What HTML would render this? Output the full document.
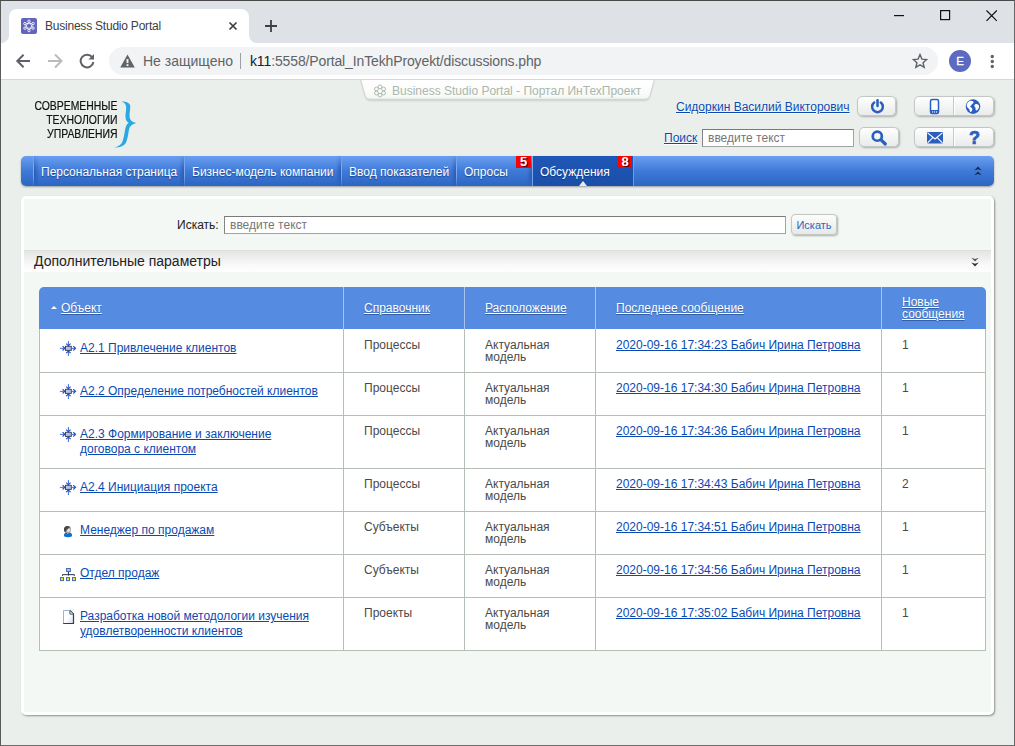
<!DOCTYPE html>
<html lang="ru">
<head>
<meta charset="utf-8">
<title>Business Studio Portal</title>
<style>
*{box-sizing:border-box;margin:0;padding:0}
html,body{width:1015px;height:746px;overflow:hidden}
body{font-family:"Liberation Sans",sans-serif;font-size:12px;color:#444;background:#ebefec;position:relative}
a{color:#0b49b2;text-decoration:underline}
.abs{position:absolute}
/* window frame */
#frame{position:absolute;left:0;top:0;width:1015px;height:746px;border:1px solid #666;border-top-color:#4a4a4a;border-left-color:#5a5a5a;border-bottom-color:#6c6c6c;z-index:50;pointer-events:none}
/* chrome */
#tabstrip{position:absolute;left:1px;top:1px;width:1013px;height:42px;background:#dee1e6}
#tab{position:absolute;left:8px;top:8px;width:240px;height:34px;background:#fff;border-radius:8px 8px 0 0}
#tab:before,#tab:after{content:"";position:absolute;bottom:0;width:8px;height:8px;background:radial-gradient(circle at 0 0,rgba(255,255,255,0) 7.5px,#fff 8.5px)}
#tab:before{left:-8px}
#tab:after{right:-8px;background:radial-gradient(circle at 100% 0,rgba(255,255,255,0) 7.5px,#fff 8.5px)}
#tabtitle{position:absolute;left:36px;top:10px;font-size:12px;color:#3c4043;white-space:nowrap;letter-spacing:-0.22px}
#toolbar{position:absolute;left:1px;top:43px;width:1013px;height:37px;background:#fff;border-bottom:1px solid #d5d8db}
#omni{position:absolute;left:108px;top:4px;width:829px;height:28px;border-radius:14px;background:#f1f3f4}
#omni span{position:absolute;top:6px;font-size:14px;white-space:nowrap}
/* page */
#page{position:absolute;left:1px;top:80px;width:1013px;height:665px;background:#ebefec;overflow:hidden}

.lg{-webkit-text-stroke:0.2px #111;transform:scaleX(0.868);transform-origin:100% 50%}
.inp{background:#fff;border:1px solid #a2a2a2;border-top-color:#7a7a7a;border-left-color:#848484}
.inp span{position:absolute;left:5px;top:2px;font-size:12px;color:#777;white-space:nowrap}
.btn{border:1px solid #c3c8c4;border-radius:5px;background:linear-gradient(#fefefe,#e9ecea);box-shadow:1px 1px 2px rgba(0,0,0,.28)}
.sbtn{border:1px solid #c3c8c4;border-radius:4px;background:linear-gradient(#fdfdfd,#e6e9e7);box-shadow:1px 1px 2px rgba(0,0,0,.3);color:#3563c0;font-size:11px;text-align:center;line-height:20px}
#nav{border-radius:5px;background:linear-gradient(#6a9ff0,#3f7ad8 50%,#2b66c3);box-shadow:0 1px 2px rgba(0,0,0,.35)}
#nav .sep{top:0;width:6px;pointer-events:none;height:30px;background:linear-gradient(90deg,rgba(20,55,140,0),rgba(20,55,140,.42) 82%,rgba(20,55,140,.48) 83.3%,rgba(165,200,255,.6) 83.4%,rgba(165,200,255,.6));-webkit-mask-image:linear-gradient(rgba(0,0,0,.2),#000 40%,#000 65%,rgba(0,0,0,.2));mask-image:linear-gradient(rgba(0,0,0,.2),#000 40%,#000 65%,rgba(0,0,0,.2))}
#nav .sep.f{transform:scaleX(-1)}
#nav .ni{top:9px;font-size:12px;color:#fff;white-space:nowrap;text-shadow:0 1px 1px rgba(10,30,100,.55)}
#nav .badge{z-index:2;top:0;width:15px;height:12px;background:#fb0202;color:#fff;font-size:13px;font-weight:bold;line-height:12px;text-align:center;text-shadow:1px 1px 0 rgba(40,0,30,.8)}
#act{background:linear-gradient(#1f57b6,#1b4fa9);box-shadow:-1px 0 0 rgba(125,170,240,.75),1px 0 0 rgba(125,170,240,.75)}
#panel{border:3px solid #fff;border-radius:5px;background:#f3f8f5;box-shadow:1px 1px 2px rgba(0,0,0,.4)}
#adv{background:linear-gradient(#e4e6e5,#f9faf9 70%,#fdfefd);border-top:1px solid #dde0de}
#adv span{position:absolute;left:10px;top:2px;font-size:14px;color:#222;white-space:nowrap}
#grid{border-collapse:separate;border-spacing:0;table-layout:fixed;width:947px;font-size:12px;color:#4a4a4a}
#grid th{height:42px;background:#558be0;font-weight:normal;text-align:left;padding:0 0 1px 20px;border-left:1px solid #a8c4ee;vertical-align:middle;line-height:12px;font-size:12px}
#grid th:first-child{border-left:0;border-radius:5px 0 0 0;padding-left:9px}
#grid th:last-child{border-radius:0 5px 0 0;padding-bottom:0}
#grid th a{color:#fff;text-shadow:0 1px 1px rgba(20,40,90,.45)}
#grid td{background:#fff;border-left:1px solid #b5beb7;border-bottom:1px solid #b5beb7;vertical-align:top;padding:9px 0 0 20px;line-height:12px;font-size:12px;color:#4a4a4a}
#grid td:last-child{border-right:1px solid #b5beb7}
#grid td.c1{padding:11px 0 0 40px;line-height:15px;position:relative}
#grid td a{color:#0b49b2}
#grid tr.r1 td{padding-top:10px}#grid tr.r1 td.c1{padding-top:12px}#grid tr.r1 .ic{top:10px}
.arr{display:inline-block;width:0;height:0;border-left:3px solid transparent;border-right:3px solid transparent;border-bottom:3.5px solid #fff;margin:0 4.5px 2px 2.5px;vertical-align:middle}
.ic{position:absolute;left:19px;top:9px;width:18px;height:18px}
</style>
</head>
<body>
<div id="tabstrip">
  <div id="tab">
    <svg class="abs" style="left:12px;top:9px" width="16" height="16" viewBox="0 0 16 16"><rect width="16" height="16" rx="2" fill="#6264bd"/><g fill="none" stroke="#fff" stroke-width="0.75" stroke-linejoin="round"><path d="M8 3.2L12.1 10.2H3.9Z"/><path d="M8 12.6L3.9 5.6H12.1Z"/></g><g fill="#6264bd" stroke="#fff" stroke-width="0.85"><circle cx="8" cy="3.2" r="1.2"/><circle cx="8" cy="12.6" r="1.2"/><circle cx="3.9" cy="5.6" r="1.2"/><circle cx="12.1" cy="5.6" r="1.2"/><circle cx="3.9" cy="10.2" r="1.2"/><circle cx="12.1" cy="10.2" r="1.2"/></g></svg>
    <div id="tabtitle">Business Studio Portal</div>
    <svg class="abs" style="left:219px;top:12px" width="10" height="10" viewBox="0 0 10 10"><path d="M1.5 1.5L8.5 8.5M8.5 1.5L1.5 8.5" stroke="#3c4043" stroke-width="1.7" fill="none"/></svg>
  </div>
  <svg class="abs" style="left:263px;top:18px" width="14" height="14" viewBox="0 0 14 14"><path d="M7 1V13M1 7H13" stroke="#3c4043" stroke-width="1.8" fill="none"/></svg>
  <!-- window controls -->
  <svg class="abs" style="left:893px;top:14px" width="10" height="2"><rect width="10" height="1.2" fill="#111"/></svg>
  <svg class="abs" style="left:939px;top:9px" width="11" height="11"><rect x="0.6" y="0.6" width="9" height="9" fill="none" stroke="#111" stroke-width="1.2"/></svg>
  <svg class="abs" style="left:984.7px;top:8.7px" width="12" height="12" viewBox="0 0 12 12"><path d="M0.5 0.5L10.8 10.8M10.8 0.5L0.5 10.8" stroke="#111" stroke-width="1.15" fill="none"/></svg>
</div>
<div id="toolbar">
  <svg class="abs" style="left:14px;top:10px" width="16" height="16" viewBox="0 0 16 16"><path d="M15 8H3.2M8.6 1.7L2.3 8L8.6 14.3" stroke="#5f6368" stroke-width="2" fill="none"/></svg>
  <svg class="abs" style="left:46px;top:10px" width="16" height="16" viewBox="0 0 16 16"><path d="M1 8H13.5M8 1.5L14.5 8L8 14.5" stroke="#b9bbbe" stroke-width="2" fill="none"/></svg>
  <svg class="abs" style="left:78px;top:10px" width="16" height="16" viewBox="0 0 16 16"><path d="M13.2 4.2A6.4 6.4 0 1 0 14.4 9" stroke="#5f6368" stroke-width="2" fill="none"/><path d="M15 1V6.6H9.4Z" fill="#5f6368"/></svg>
  <div id="omni">
    <svg class="abs" style="left:11px;top:7px" width="15" height="14" viewBox="0 0 15 14"><path d="M7.5 0.5L14.8 13.5H0.2Z" fill="#5f6368"/><rect x="6.55" y="5" width="1.9" height="4.1" fill="#f1f3f4"/><rect x="6.55" y="10.2" width="1.9" height="1.9" fill="#f1f3f4"/></svg>
    <span style="left:34px;color:#5f6368">Не защищено</span>
    <div class="abs" style="left:131px;top:6px;width:1px;height:16px;background:#9aa0a6"></div>
    <span style="left:141px;color:#202124;letter-spacing:-0.13px">k11<span style="position:static;color:#5f6368">:5558/Portal_InTekhProyekt/discussions.php</span></span>
    <svg class="abs" style="left:803px;top:6px" width="16" height="16" viewBox="0 0 16 16"><path d="M8 1.6L9.9 6.1L14.7 6.5L11.05 9.65L12.15 14.4L8 11.9L3.85 14.4L4.95 9.65L1.3 6.5L6.1 6.1Z" fill="none" stroke="#5f6368" stroke-width="1.4" stroke-linejoin="miter"/></svg>
  </div>
  <div class="abs" style="left:948px;top:7px;width:22px;height:22px;border-radius:11px;background:#5c6bc0;color:#fff;font-size:11.5px;-webkit-text-stroke:0.3px #fff;text-align:center;line-height:22px">E</div>
  <svg class="abs" style="left:989px;top:10px" width="5" height="17"><circle cx="2.3" cy="3.5" r="1.7" fill="#5f6368"/><circle cx="2.3" cy="8.5" r="1.7" fill="#5f6368"/><circle cx="2.3" cy="13.5" r="1.7" fill="#5f6368"/></svg>
</div>
<div id="page">
<svg width="0" height="0" style="position:absolute"><defs>
<linearGradient id="gbox" x1="0" y1="0" x2="1" y2="1"><stop offset="0" stop-color="#c9d3ea"/><stop offset="1" stop-color="#9fb0d4"/></linearGradient>
<linearGradient id="gdoc" x1="0" y1="0" x2="1" y2="1"><stop offset="0.5" stop-color="#fff"/><stop offset="1" stop-color="#d3d9ea"/></linearGradient>
<radialGradient id="ghead" cx="0.6" cy="0.55" r="0.6"><stop offset="0" stop-color="#ffffff"/><stop offset="0.4" stop-color="#cfcfcf"/><stop offset="0.85" stop-color="#6e6e6e"/><stop offset="1" stop-color="#5a5a5a"/></radialGradient>
<symbol id="i-proc" viewBox="0 0 18 18"><g fill="none" stroke="#3a6ae6" stroke-width="1"><path d="M0.9 9.35H5.8"/><path d="M12.9 9.35H16.6"/><path d="M9.4 2V6.8"/><path d="M9.4 17V12"/></g><g fill="none" stroke="#2747b0" stroke-width="1.1"><path d="M3.6 7.2L5.8 9.35L3.6 11.5"/><path d="M14.3 7.2L16.5 9.35L14.3 11.5"/><path d="M7.2 4.6L9.4 6.8L11.6 4.6"/><path d="M7.2 14.2L9.4 12L11.6 14.2"/></g><rect x="6.5" y="7.3" width="5.8" height="4.1" fill="url(#gbox)" stroke="#2c3e5c" stroke-width="0.9"/></symbol>
<symbol id="i-man" viewBox="0 0 18 18"><path d="M4.9 14.5C4.9 12.3 6.6 11.2 9 11.2C11.4 11.2 13.1 12.3 13.1 14.5C13.1 15.8 11.6 16.2 9 16.2C6.4 16.2 4.9 15.8 4.9 14.5Z" fill="#0f6fd0"/><path d="M7.7 11.5L8.9 12.8L10.1 11.5Z" fill="#fff"/><circle cx="8.5" cy="8.6" r="3.5" fill="url(#ghead)"/><path d="M5.05 9.4A3.5 3.5 0 0 1 10.9 6L6.3 10.9Q5.3 10.4 5.05 9.4Z" fill="#3a3636" opacity="0.8"/></symbol>
<symbol id="i-org" viewBox="0 0 18 18"><path d="M9.45 7.9V11.6M3.55 11.9V10.65H15.35V11.9" fill="none" stroke="#2a3350" stroke-width="1"/><rect x="7.55" y="4.5" width="3.9" height="3" fill="#a9c4f8" stroke="#4a6cb0" stroke-width="1"/><g fill="#ffee00" stroke="#4a6cb0" stroke-width="1"><rect x="1.5" y="13.6" width="3" height="3"/><rect x="7.5" y="13.6" width="3" height="3"/><rect x="13.5" y="13.6" width="3" height="3"/></g></symbol>
<symbol id="i-doc" viewBox="0 0 18 18"><path d="M4.5 3.5H11L14.5 7V16.5H4.5Z" fill="url(#gdoc)"/><path d="M4.5 16.5V3.5H11" fill="none" stroke="#9db2e2" stroke-width="1"/><path d="M11 3.5L14.5 7V16.5H4.2" fill="none" stroke="#2c3e58" stroke-width="1.2"/><path d="M10.9 3.9V7.1H14.2" fill="#fff" stroke="#2c3e58" stroke-width="0.9"/></symbol>
</defs></svg>


<!-- logo -->
<div class="abs" id="logo" style="left:0;top:19px;width:116.5px;text-align:right;color:#111;font-size:12px;line-height:14px;white-space:nowrap">
<div class="lg">СОВРЕМЕННЫЕ</div><div class="lg">ТЕХНОЛОГИИ</div><div class="lg">УПРАВЛЕНИЯ</div></div>
<svg class="abs" style="left:113px;top:20px" width="24" height="50" viewBox="0 0 24 50"><path d="M7.3 1.4C11 1.2 15.6 2.2 16.2 5.5C16.6 9 15.2 13 15.6 17C16 20.5 18.5 22 22.1 23C18.5 24 16 25.5 15 29.8C14 35 13.6 40 11.5 43.5C9.5 46.5 5 47.8 0.2 47.6C4 46.8 7 45 8.3 42C10 38 10.4 33 11.2 29C11.8 26 12.8 24.3 14.6 23.1C12.6 21.5 11.6 19.5 11.5 17C11.3 13 12.6 9 12 6C11.6 3.6 10 2.2 7.3 1.4Z" fill="#2aa8e6"/></svg>

<!-- top center tab -->
<svg class="abs" style="left:356px;top:0" width="302" height="24" viewBox="0 0 302 24"><defs><linearGradient id="tg" x1="0" y1="0" x2="0" y2="1"><stop offset="0" stop-color="#ffffff"/><stop offset="0.75" stop-color="#f9fbf9"/><stop offset="1" stop-color="#f0f4f1"/></linearGradient><filter id="tf" x="-5%" y="-20%" width="110%" height="160%"><feGaussianBlur stdDeviation="0.9"/></filter></defs>
<path d="M4 -1L8.6 15.8Q9.6 19.8 13 19.8H288Q291.6 19.8 292.6 15.8L297 -1Z" fill="#9aa39c" opacity="0.55" filter="url(#tf)" transform="translate(0,0.8)"/>
<path d="M3.5 -1L8.2 15.8Q9.2 19.3 12.6 19.3H288.4Q291.8 19.3 292.8 15.8L297.5 -1Z" fill="url(#tg)" stroke="#cdd3ce" stroke-width="0.9"/></svg>
<svg class="abs" style="left:372px;top:4px" width="14" height="14" viewBox="0 0 14 14"><g fill="none" stroke="#aebbb0" stroke-width="1"><circle cx="7" cy="2.9" r="1.9"/><circle cx="7" cy="11.1" r="1.9"/><circle cx="3.45" cy="4.95" r="1.9"/><circle cx="10.55" cy="4.95" r="1.9"/><circle cx="3.45" cy="9.05" r="1.9"/><circle cx="10.55" cy="9.05" r="1.9"/></g></svg>
<div class="abs" style="left:391px;top:4px;font-size:12px;color:#a9b6ab;white-space:nowrap;text-shadow:0 1px 0 #fff">Business Studio Portal - Портал ИнТехПроект</div>

<!-- user / search -->
<a class="abs" style="left:675px;top:20px;white-space:nowrap;text-shadow:0 1px 0 #fff">Сидоркин Василий Викторович</a>
<a class="abs" style="left:663px;top:51px;white-space:nowrap;text-shadow:0 1px 0 #fff">Поиск</a>
<div class="abs inp" style="left:701px;top:49px;width:152px;height:18px"><span style="top:1px">введите текст</span></div>

<div class="abs btn" style="left:856px;top:16px;width:39px;height:20px">
 <svg class="abs" style="left:12px;top:2px" width="15" height="15" viewBox="0 0 15 15"><path d="M4.2 3.6A5.35 5.35 0 1 0 10.8 3.6" fill="none" stroke="#2a5fc0" stroke-width="2.5" stroke-linecap="round"/><path d="M7.5 1.3V7" stroke="#2a5fc0" stroke-width="2.5" stroke-linecap="round"/></svg></div>
<div class="abs btn" style="left:858px;top:47px;width:40px;height:20px">
 <svg class="abs" style="left:10px;top:1px" width="19" height="18" viewBox="0 0 19 18"><circle cx="7.3" cy="7.2" r="4.55" fill="none" stroke="#2a5fc0" stroke-width="2.7"/><path d="M10.8 10.6L15.3 15" stroke="#2a5fc0" stroke-width="3.2" stroke-linecap="round"/></svg></div>
<div class="abs btn" style="left:913px;top:16px;width:80px;height:20px">
 <div class="abs" style="left:38px;top:0;width:1px;height:18px;background:#c5cac6"></div><div class="abs" style="left:39px;top:0;width:1px;height:18px;background:#fff"></div>
 <svg class="abs" style="left:14px;top:1px" width="11" height="17" viewBox="0 0 11 17"><rect x="1.5" y="1.6" width="8" height="13.8" rx="1.6" fill="#fff" stroke="#2a5fc0" stroke-width="1.5"/><path d="M1 12H10V14.3Q10 16 8.3 16H2.7Q1 16 1 14.3Z" fill="#2a5fc0"/><rect x="3" y="13.4" width="1.1" height="1.1" fill="#fff"/><rect x="5" y="13.4" width="1.1" height="1.1" fill="#fff"/><rect x="7" y="13.4" width="1.1" height="1.1" fill="#fff"/></svg>
 <svg class="abs" style="left:50px;top:2px" width="16" height="16" viewBox="0 0 16 16"><circle cx="8" cy="7.6" r="7.3" fill="#2a5fc0"/><path d="M4.2 2.2C5.8 1.4 7.6 1.8 8.4 2.8C9 3.6 8.2 4.6 7.2 5C6.2 5.4 6.6 6.4 5.6 6.8C4.8 7.2 5.4 8.4 6.4 8.8C7.4 9.2 7.6 10.4 7 11.6C6.6 12.6 5.8 13.6 5.2 12.8C4.6 12 4.8 10.6 3.8 9.8C2.8 9 1.6 7.6 1.6 6C2 4.4 3 3 4.2 2.2ZM10 5.4C11 4.8 12.6 5 13.6 6C14.4 7 14.2 8.6 13.4 9.8C12.6 11 11.4 12 10.8 11C10.2 10 11 8.8 10 8C9.2 7.4 9 6 10 5.4Z" fill="#fff"/></svg></div>
<div class="abs btn" style="left:913px;top:47px;width:80px;height:20px">
 <div class="abs" style="left:38px;top:0;width:1px;height:18px;background:#c5cac6"></div><div class="abs" style="left:39px;top:0;width:1px;height:18px;background:#fff"></div>
 <svg class="abs" style="left:12px;top:4px" width="16" height="12" viewBox="0 0 16 12"><rect width="16" height="11.4" rx="0.8" fill="#2a5fc0"/><path d="M0.6 0.8L8 7L15.4 0.8M0.6 10.8L6 5.4M15.4 10.8L10 5.4" fill="none" stroke="#fff" stroke-width="1.1"/></svg>
 <div class="abs" style="left:40px;top:-1px;width:39px;text-align:center;font-size:18px;font-weight:bold;color:#2a5fc0;line-height:22px;-webkit-text-stroke:0.7px #2a5fc0">?</div></div>

<!-- nav bar -->
<div class="abs" id="nav" style="left:20px;top:76px;width:973px;height:30px">
 <div class="abs sep f" style="left:12px"></div>
 <div class="abs ni" style="left:20px">Персональная страница</div>
 <div class="abs sep" style="left:158px"></div>
 <div class="abs ni" style="left:171px">Бизнес-модель компании</div>
 <div class="abs sep" style="left:315px"></div>
 <div class="abs ni" style="left:328px">Ввод показателей</div>
 <div class="abs sep" style="left:430px"></div>
 <div class="abs ni" style="left:443px">Опросы</div>
 <div class="abs badge" style="left:495px">5</div>
 <div class="abs sep" style="left:506px"></div>
 <div class="abs" id="act" style="left:512px;top:0;width:100px;height:30px"></div>
 <div class="abs ni" style="left:519px">Обсуждения</div>
 <div class="abs badge" style="left:597px;width:14px">8</div>
 <div class="abs" style="left:557px;top:25px;margin-left:0.5px;width:0;height:0;border-left:4.5px solid transparent;border-right:4.5px solid transparent;border-bottom:5px solid #e9edea"></div>
 <svg class="abs" style="left:953px;top:10px" width="8" height="10" viewBox="0 0 8 10"><path d="M0.3 4.5L4 0.6L7.7 4.5L4 3.3ZM0.3 9.3L4 5.4L7.7 9.3L4 8.1Z" fill="#14274d"/></svg>
</div>

<!-- main panel -->
<div class="abs" id="panel" style="left:20px;top:116px;width:973px;height:519px">
 <div class="abs" style="left:153px;top:19px;font-size:12px;color:#222">Искать:</div>
 <div class="abs inp" style="left:200px;top:17px;width:562px;height:18px"><span style="top:1px">введите текст</span></div>
 <div class="abs sbtn" style="left:767px;top:15px;width:46px;height:21px">Искать</div>
 <div class="abs" id="adv" style="left:0;top:51px;width:967px;height:22px"><span>Дополнительные параметры</span>
  <svg class="abs" style="left:946.5px;top:6px" width="8" height="10" viewBox="0 0 8 10"><defs><linearGradient id="cg" x1="0" y1="0" x2="0" y2="1"><stop offset="0" stop-color="#8a8a8a"/><stop offset="1" stop-color="#222"/></linearGradient></defs><path d="M0.3 0.7L4 4.6L7.7 0.7L4 2Z" fill="#555"/><path d="M0.3 5.5L4 9.4L7.7 5.5L4 6.8Z" fill="#2e2e2e"/></svg></div>
 <table id="grid" class="abs" style="left:15px;top:88px" cellspacing="0" cellpadding="0">
  <colgroup><col style="width:304px"><col style="width:121px"><col style="width:131px"><col style="width:286px"><col style="width:105px"></colgroup>
  <tr class="hd"><th><span class="arr"></span><a>Объект</a></th><th><a>Справочник</a></th><th><a>Расположение</a></th><th><a>Последнее сообщение</a></th><th><a>Новые<br>сообщения</a></th></tr>
  <tr class="r1" style="height:44px"><td class="c1"><svg class="ic" width="18" height="18"><use href="#i-proc"/></svg><a>A2.1 Привлечение клиентов</a></td><td>Процессы</td><td>Актуальная<br>модель</td><td><a>2020-09-16 17:34:23 Бабич Ирина Петровна</a></td><td>1</td></tr>
<tr style="height:43px"><td class="c1"><svg class="ic" width="18" height="18"><use href="#i-proc"/></svg><a>A2.2 Определение потребностей клиентов</a></td><td>Процессы</td><td>Актуальная<br>модель</td><td><a>2020-09-16 17:34:30 Бабич Ирина Петровна</a></td><td>1</td></tr>
<tr style="height:53px"><td class="c1"><svg class="ic" width="18" height="18"><use href="#i-proc"/></svg><a>A2.3 Формирование и заключение<br>договора с клиентом</a></td><td>Процессы</td><td>Актуальная<br>модель</td><td><a>2020-09-16 17:34:36 Бабич Ирина Петровна</a></td><td>1</td></tr>
<tr style="height:43px"><td class="c1"><svg class="ic" width="18" height="18"><use href="#i-proc"/></svg><a>A2.4 Инициация проекта</a></td><td>Процессы</td><td>Актуальная<br>модель</td><td><a>2020-09-16 17:34:43 Бабич Ирина Петровна</a></td><td>2</td></tr>
<tr style="height:43px"><td class="c1"><svg class="ic" width="18" height="18"><use href="#i-man"/></svg><a>Менеджер по продажам</a></td><td>Субъекты</td><td>Актуальная<br>модель</td><td><a>2020-09-16 17:34:51 Бабич Ирина Петровна</a></td><td>1</td></tr>
<tr style="height:43px"><td class="c1"><svg class="ic" width="18" height="18"><use href="#i-org"/></svg><a>Отдел продаж</a></td><td>Субъекты</td><td>Актуальная<br>модель</td><td><a>2020-09-16 17:34:56 Бабич Ирина Петровна</a></td><td>1</td></tr>
<tr style="height:53px"><td class="c1"><svg class="ic" width="18" height="18"><use href="#i-doc"/></svg><a>Разработка новой методологии изучения<br>удовлетворенности клиентов</a></td><td>Проекты</td><td>Актуальная<br>модель</td><td><a>2020-09-16 17:35:02 Бабич Ирина Петровна</a></td><td>1</td></tr>

 </table>
</div>

</div>
<div id="frame"></div>
</body>
</html>
